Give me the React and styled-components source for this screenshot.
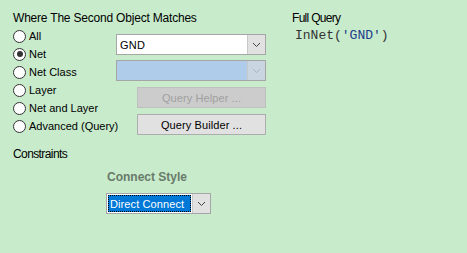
import React from "react";
import styled, { createGlobalStyle } from "styled-components";

const Global = createGlobalStyle`
  html, body {
    margin: 0;
    padding: 0;
    background: #c8ebcc;
  }
  body {
    font-family: "Liberation Sans", Arial, sans-serif;
    font-size: 12px;
    color: #000;
  }
`;

const Page = styled.div`
  width: 467px;
  height: 253px;
  box-sizing: border-box;
  padding: 11px 0 0 13px;
  background: #c8ebcc;
  overflow: hidden;
`;

const Top = styled.div`
  display: flex;
`;

const Matches = styled.div`
  width: 279px;
`;

const Label = styled.div`
  font-family: "Liberation Sans", Arial, sans-serif;
  font-size: ${(p) => p.$size || 12}px;
  line-height: 14px;
  letter-spacing: ${(p) => p.$ls || "0"};
  color: #000;
`;

const Columns = styled.div`
  display: flex;
  margin-top: 2px;
`;

const RadioList = styled.div`
  display: flex;
  flex-direction: column;
  width: 103px;
`;

const RadioRow = styled.label`
  display: flex;
  align-items: center;
  height: 18px;
  gap: 3px;
  font-size: 11px;
  white-space: nowrap;
`;

const Circle = styled.span`
  width: 11px;
  height: 11px;
  border: 1px solid #333;
  border-radius: 50%;
  background: #fff;
  display: flex;
  align-items: center;
  justify-content: center;
  flex: none;
  &::after {
    content: "";
    display: ${(p) => (p.$on ? "block" : "none")};
    width: 6px;
    height: 6px;
    border-radius: 50%;
    background: #333;
  }
`;

const Controls = styled.div`
  display: flex;
  flex-direction: column;
  align-items: flex-end;
  width: 150px;
  padding-top: 7px;
`;

const Combo = styled.div`
  display: flex;
  width: ${(p) => p.$w || 150}px;
  height: 21px;
  box-sizing: border-box;
  border: 1px solid #a6a6a6;
  background: ${(p) => (p.$disabled ? "#b0cceb" : "#fff")};
  margin-bottom: ${(p) => p.$mb || 0}px;
`;

const ComboText = styled.div`
  flex: 1;
  display: flex;
  align-items: center;
  padding-left: 3px;
  font-size: 11px;
  letter-spacing: 0.2px;
  color: #000;
  overflow: hidden;
`;

const SelText = styled.div`
  flex: 1;
  display: flex;
  align-items: center;
  margin: 1px;
  padding-left: 2px;
  background: #0078d7;
  color: #fff;
  outline: 1px dotted #000;
  outline-offset: -1px;
  font-size: 11px;
  letter-spacing: 0.1px;
  white-space: nowrap;
`;

const Arrow = styled.div`
  width: 17px;
  display: flex;
  align-items: center;
  justify-content: center;
  background: ${(p) => (p.$disabled ? "#c9d6e2" : "#e1e1e1")};
  border-left: 1px solid #c9c9c9;
  color: ${(p) => (p.$disabled ? "#a8b4bf" : "#444")};
`;

const Button = styled.div`
  width: 129px;
  height: 21px;
  box-sizing: border-box;
  border: 1px solid ${(p) => (p.$disabled ? "#bfbfbf" : "#adadad")};
  background: ${(p) => (p.$disabled ? "#cccccc" : "#e1e1e1")};
  color: ${(p) => (p.$disabled ? "#a0a0a0" : "#000")};
  display: flex;
  align-items: center;
  justify-content: center;
  font-size: 11px;
  letter-spacing: 0.1px;
  margin-bottom: ${(p) => p.$mb || 0}px;
`;

const QueryPanel = styled.div`
  padding-left: 0;
`;

const QueryText = styled.div`
  font-family: "Liberation Mono", "Courier New", monospace;
  font-size: 13px;
  line-height: 16px;
  margin: 3px 0 0 3px;
  color: #333;
`;

const Quoted = styled.span`
  color: #1c3d8c;
`;

const Constraints = styled.div`
  margin-top: 12px;
`;

const Style = styled.div`
  padding-left: 93px;
  margin-top: 9px;
`;

const StyleTitle = styled.div`
  font-weight: bold;
  font-size: 12px;
  line-height: 14px;
  color: #687a69;
  margin-left: 1px;
  margin-bottom: 9px;
`;

const Chevron = ({ size = 9 }) => (
  <svg width={size} height={6} viewBox="0 0 9 6">
    <path d="M1 1 L4.5 4.5 L8 1" fill="none" stroke="currentColor" strokeWidth="1" />
  </svg>
);

const options = ["All", "Net", "Net Class", "Layer", "Net and Layer", "Advanced (Query)"];

export default function App() {
  return (
    <Page>
      <Global />
      <Top>
        <Matches>
          <Label $ls="-0.2px">Where The Second Object Matches</Label>
          <Columns>
            <RadioList>
              {options.map((o) => (
                <RadioRow key={o}>
                  <Circle $on={o === "Net"} />
                  {o}
                </RadioRow>
              ))}
            </RadioList>
            <Controls>
              <Combo $mb={5}>
                <ComboText>GND</ComboText>
                <Arrow>
                  <Chevron />
                </Arrow>
              </Combo>
              <Combo $disabled $mb={6}>
                <ComboText />
                <Arrow $disabled>
                  <Chevron />
                </Arrow>
              </Combo>
              <Button $disabled $mb={6}>Query Helper ...</Button>
              <Button>Query Builder ...</Button>
            </Controls>
          </Columns>
        </Matches>
        <QueryPanel>
          <Label $ls="-0.7px">Full Query</Label>
          <QueryText>
            InNet(<Quoted>'GND'</Quoted>)
          </QueryText>
        </QueryPanel>
      </Top>
      <Constraints>
        <Label $ls="-0.6px">Constraints</Label>
      </Constraints>
      <Style>
        <StyleTitle>Connect Style</StyleTitle>
        <Combo $w={105}>
          <SelText>Direct Connect</SelText>
          <Arrow>
            <Chevron />
          </Arrow>
        </Combo>
      </Style>
    </Page>
  );
}
